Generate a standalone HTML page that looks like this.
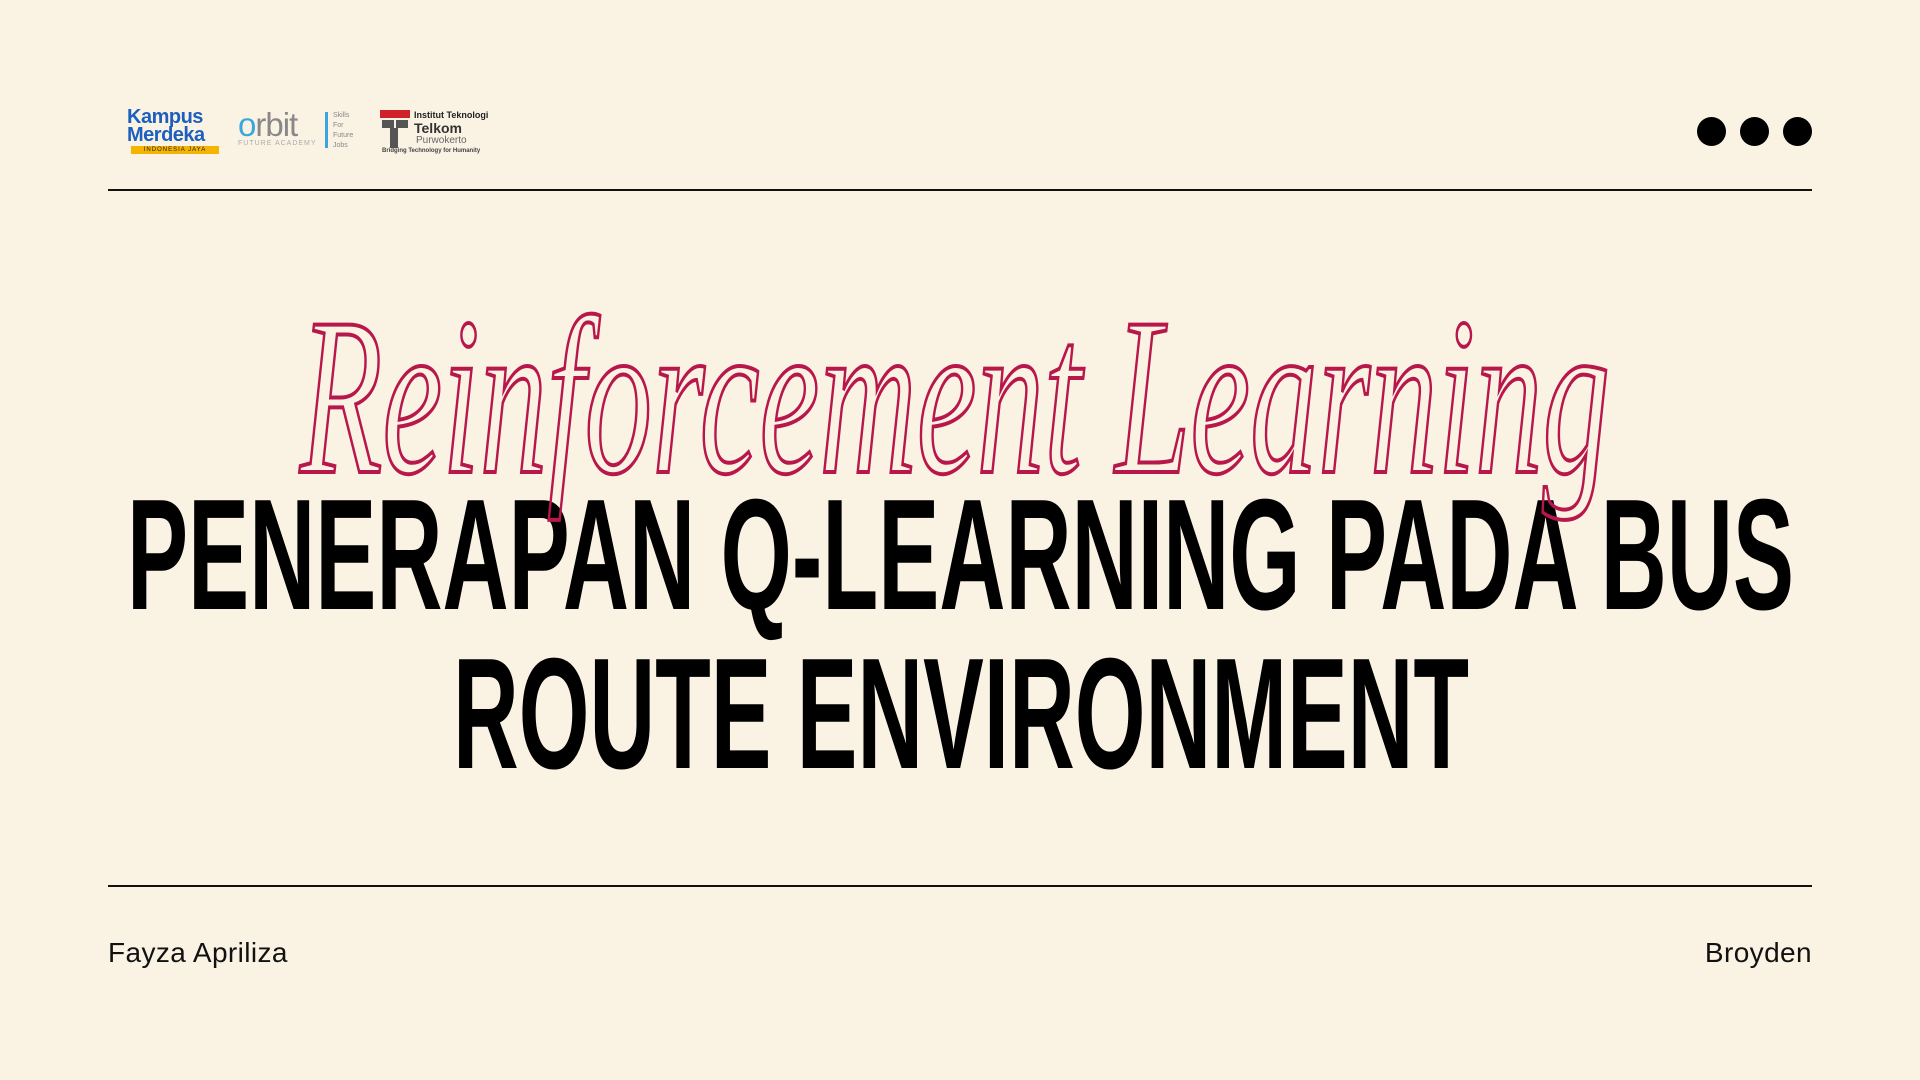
<!DOCTYPE html>
<html><head><meta charset="utf-8"><style>
html,body{margin:0;padding:0}
body{width:1920px;height:1080px;background:#FAF3E4;position:relative;overflow:hidden;font-family:"Liberation Sans",sans-serif}
.line{position:absolute;left:108px;width:1704px;height:2px;background:#111}
.dot{position:absolute;top:117px;width:29px;height:29px;border-radius:50%;background:#000}
.ft{position:absolute;top:937px;font-size:28px;color:#111;letter-spacing:0.4px}
</style></head><body>
<div style="position:absolute;left:127px;top:108px;width:96px;font-weight:bold;color:#1c5fbf;font-size:20px;line-height:18px;letter-spacing:-0.5px">Kampus<br>Merdeka</div>
<div style="position:absolute;left:131px;top:146px;width:88px;height:8px;background:#f5b400;font-size:6px;line-height:8px;color:#222;text-align:center;letter-spacing:1px">INDONESIA JAYA</div>
<div style="position:absolute;left:238px;top:106px;font-size:33px;color:#888;letter-spacing:-1px"><span style="color:#3aa6e0">o</span>rbit</div>
<div style="position:absolute;left:238px;top:140px;font-size:7px;color:#aaa;letter-spacing:1px">FUTURE ACADEMY</div>
<div style="position:absolute;left:325px;top:112px;width:3px;height:36px;background:#3aa6e0"></div>
<div style="position:absolute;left:333px;top:111px;font-size:7px;line-height:10px;color:#888">Skills<br>For<br>Future<br>Jobs</div>
<svg style="position:absolute;left:380px;top:110px" width="30" height="40"><rect x="0" y="0" width="30" height="8" fill="#d0202a"/><rect x="2" y="10" width="12" height="8" fill="#555"/><rect x="16" y="10" width="12" height="8" fill="#555"/><rect x="10" y="18" width="8" height="20" fill="#555"/></svg>
<div style="position:absolute;left:414px;top:110px;font-size:9px;font-weight:bold;color:#222">Institut Teknologi</div>
<div style="position:absolute;left:414px;top:120px;font-size:14px;font-weight:bold;color:#333">Telkom</div>
<div style="position:absolute;left:416px;top:135px;font-size:10px;color:#666">Purwokerto</div>
<div style="position:absolute;left:382px;top:148px;font-size:6px;font-weight:bold;color:#444">Bridging Technology for Humanity</div>
<div class="dot" style="left:1697px"></div><div class="dot" style="left:1740px"></div><div class="dot" style="left:1783px"></div>
<div class="line" style="top:189px"></div>
<div class="line" style="top:885px"></div>
<svg style="position:absolute;left:0;top:0" width="1920" height="1080">
<text x="127" y="609" textLength="1667" lengthAdjust="spacingAndGlyphs" font-family="Liberation Sans" font-weight="bold" font-size="158" fill="#000">PENERAPAN Q-LEARNING PADA BUS</text>
<text x="453" y="768" textLength="1016" lengthAdjust="spacingAndGlyphs" font-family="Liberation Sans" font-weight="bold" font-size="158" fill="#000">ROUTE ENVIRONMENT</text>
<text x="300" y="472" textLength="1310" lengthAdjust="spacingAndGlyphs" font-family="Liberation Serif" font-style="italic" font-size="225" fill="none" stroke="#B8174B" stroke-width="4">Reinforcement Learning</text>
</svg>
<div class="ft" style="left:108px">Fayza Apriliza</div>
<div class="ft" style="right:108px">Broyden</div>
</body></html>
